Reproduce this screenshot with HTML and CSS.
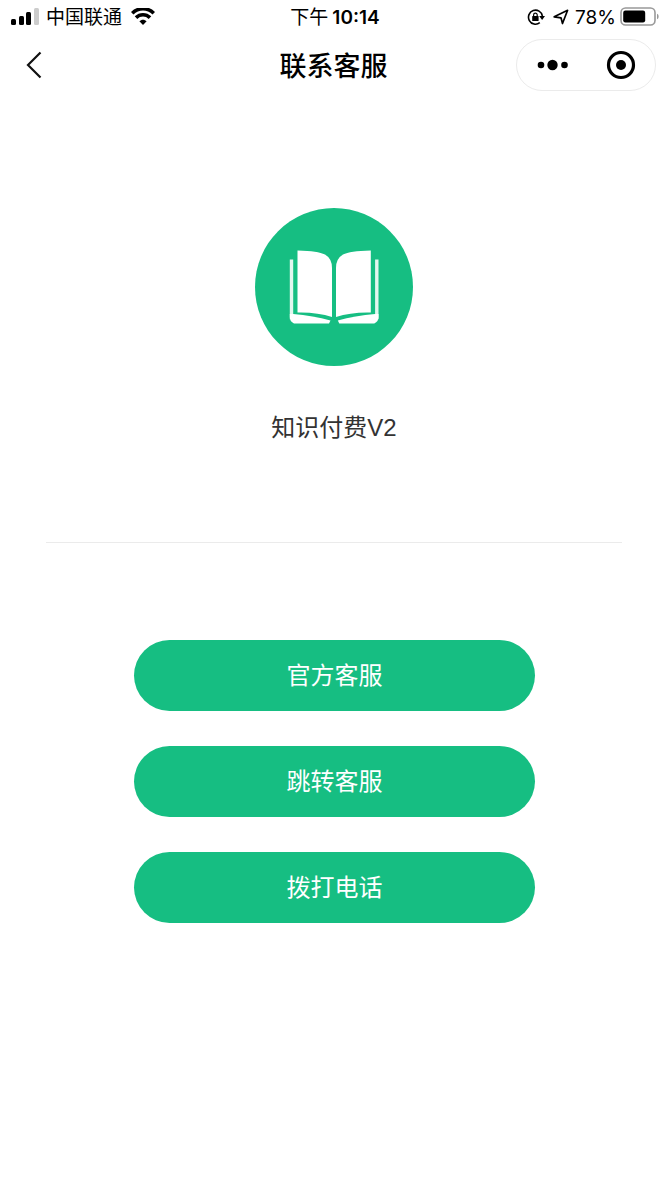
FILE: index.html
```html
<!DOCTYPE html>
<html lang="zh-CN">
<head>
<meta charset="utf-8">
<meta name="viewport" content="width=device-width, initial-scale=1">
<title>联系客服</title>
<link rel="stylesheet" href="styles.css">
</head>
<body>
<div class="status">
  <div class="status-left">
    <svg width="28" height="18" viewBox="0 0 28 18" aria-hidden="true">
      <rect x="0" y="11" width="5" height="6" rx="1.5"/>
      <rect x="8" y="8" width="5" height="9" rx="1.5"/>
      <rect x="15" y="4" width="5" height="13" rx="1.5"/>
      <rect x="23" y="0" width="5" height="17" rx="1.5" fill="#ccc"/>
    </svg>
    <span>中国联通</span>
    <svg class="wifi" width="24" height="18" viewBox="0 0 24 18" aria-hidden="true">
      <g fill="none" stroke="#000" stroke-width="3.6">
        <path d="M1.200 5.300C7.400-.8 16.600-.8 22.800 5.300"/>
        <path d="M5 9.600c4-3.900 10-3.900 14 0"/>
      </g>
      <path d="M8.400 13.200c2-2.100 5.200-2.100 7.200 0L12 17z"/>
    </svg>
  </div>
  <div class="clock"><span>下午</span><b>10:14</b></div>
  <div class="status-right">
    <svg width="18" height="18" viewBox="0 0 18 18" aria-hidden="true">
      <path d="M12.800 14.700A7 7 0 1 1 15.400 8" fill="none" stroke="#000" stroke-width="1.6"/>
      <path d="M12.200 8H18l-2.900 4z"/>
      <rect x="5.2" y="8" width="6.4" height="5" rx=".6"/>
      <path d="M6.600 8.400V6.900a1.800 1.800 0 0 1 3.600 0v1.500" fill="none" stroke="#000" stroke-width="1.2"/>
    </svg>
    <svg class="locate" width="16" height="16" viewBox="0 0 16 16" aria-hidden="true">
      <path d="M1.200 7.800 14.600 1.300 9.500 14.500 8 8.800z" fill="none" stroke="#000" stroke-width="1.7" stroke-linejoin="round"/>
    </svg>
    <span>78%</span>
    <svg width="39" height="20" viewBox="0 0 39 20" aria-hidden="true">
      <rect x="1" y="1" width="34" height="17" rx="4.5" fill="none" stroke="#999" stroke-width="1.6"/>
      <rect x="3.2" y="3.500" width="22" height="12" rx="2.2"/>
      <path d="M37 6.700c2.200.8 2.200 4.700 0 5.500z" fill="#999"/>
    </svg>
  </div>
</div>

<header class="nav">
  <button class="icon-button back" type="button" aria-label="返回">
    <svg width="16" height="28" viewBox="0 0 16 28"><path d="M14.500 1.500 2 14l12.500 12.500" fill="none" stroke="#111" stroke-width="2.200"/></svg>
  </button>
  <h1 class="title">联系客服</h1>
  <div class="capsule">
    <button class="icon-button" type="button" aria-label="更多">
      <svg width="32" height="12" viewBox="0 0 32 12"><circle cx="5" cy="6" r="3.300"/><circle cx="16.500" cy="6" r="5.200"/><circle cx="28.500" cy="6" r="3.300"/></svg>
    </button>
    <button class="icon-button" type="button" aria-label="关闭">
      <svg width="30" height="30" viewBox="0 0 30 30"><circle cx="15" cy="15" r="12.500" fill="none" stroke="#000" stroke-width="3.200"/><circle cx="15" cy="15" r="5"/></svg>
    </button>
  </div>
</header>

<main class="page">
  <section class="brand">
    <svg class="logo" viewBox="0 0 158 158" role="img" aria-label="知识付费V2">
      <circle cx="79" cy="79" r="79" fill="#16be82"/>
      <g fill="#fff">
        <path d="M42.500 42.500C57 43 65 44 70 46.500Q77 50.500 77 60V109Q62 104 42.500 104.500z"/>
        <path d="M115.800 42.500C101 43 93 44 88 46.500Q81 50.500 81 60V109Q96 104 115.800 104.500z"/>
      </g>
      <g fill="#e2f7ef">
        <path d="M34.800 51.500h3.400v55l-3.400 5z"/>
        <path d="M123.500 51.500h-3.400v55l3.400 5z"/>
      </g>
      <g fill="#fff">
        <path d="M34.800 106h3.400Q58 107.500 75.500 112.500L74 115.500H39Q34.800 113.500 34.800 109z"/>
        <path d="M123.500 106h-3.400Q100 107.500 82.800 112.500L84.300 115.500H119.300Q123.500 113.500 123.500 109z"/>
      </g>
    </svg>
    <p class="name">知识付费V2</p>
  </section>
  <div class="actions">
    <button class="action" type="button">官方客服</button>
    <button class="action" type="button">跳转客服</button>
    <button class="action" type="button">拨打电话</button>
  </div>
</main>
</body>
</html>
```
FILE: styles.css
```css
* {
  box-sizing: border-box;
}

body {
  margin: 0;
  background: #fff;
  color: #000;
  font-family: Inter, "Noto Sans CJK SC", sans-serif;
}

svg {
  display: block;
  flex: none;
}

.status,
.nav {
  display: grid;
  grid-template-columns: 1fr auto 1fr;
  align-items: center;
}

.status {
  height: 34px;
  padding: 0 8px 0 11px;
  font-size: 19px;
  line-height: 32px;
}

.status span,
.status b {
  padding-top: 2px;
}

.status-left,
.status-right,
.clock {
  display: flex;
  align-items: center;
}

.status-left {
  gap: 7px;
}

.wifi {
  margin-left: 2px;
}

.status-right {
  justify-content: flex-end;
  gap: 4px;
}

.clock {
  gap: 4px;
}

.clock b {
  font-weight: 600;
}

.locate {
  margin: 0 2px 0 4px;
}

.nav {
  height: 62px;
  padding: 0 11px;
}

.icon-button {
  display: flex;
  align-items: center;
  justify-content: center;
  padding: 0;
  border: 0;
  background: none;
  cursor: pointer;
}

.back {
  width: 46px;
  height: 48px;
}

.title {
  margin: 0;
  padding-top: 3px;
  font-size: 27px;
  font-weight: 500;
  line-height: 40px;
}

.capsule {
  display: grid;
  grid-template-columns: 1fr 1fr;
  justify-self: end;
  width: 140px;
  height: 52px;
  border: 1px solid #ebebeb;
  border-radius: 26px;
}

.page {
  padding: 112px 45px 64px 46px;
}

.brand {
  display: flex;
  flex-direction: column;
  align-items: center;
  padding-bottom: 96px;
  border-bottom: 1px solid #ebebeb;
}

.logo {
  width: 158px;
  height: 158px;
}

.name {
  margin: 44px 0 0;
  color: #333;
  font-family: "Liberation Sans", "Noto Sans CJK SC", sans-serif;
  font-size: 24px;
  line-height: 36px;
}

.actions {
  display: flex;
  flex-direction: column;
  gap: 35px;
  padding: 97px 87px 0 88px;
}

.action {
  height: 71px;
  padding: 0 0 4px;
  border: 0;
  border-radius: 36px;
  background: #16be82;
  color: #fff;
  font-family: "Noto Sans CJK SC", sans-serif;
  font-size: 24px;
  line-height: 36px;
  cursor: pointer;
}
```
